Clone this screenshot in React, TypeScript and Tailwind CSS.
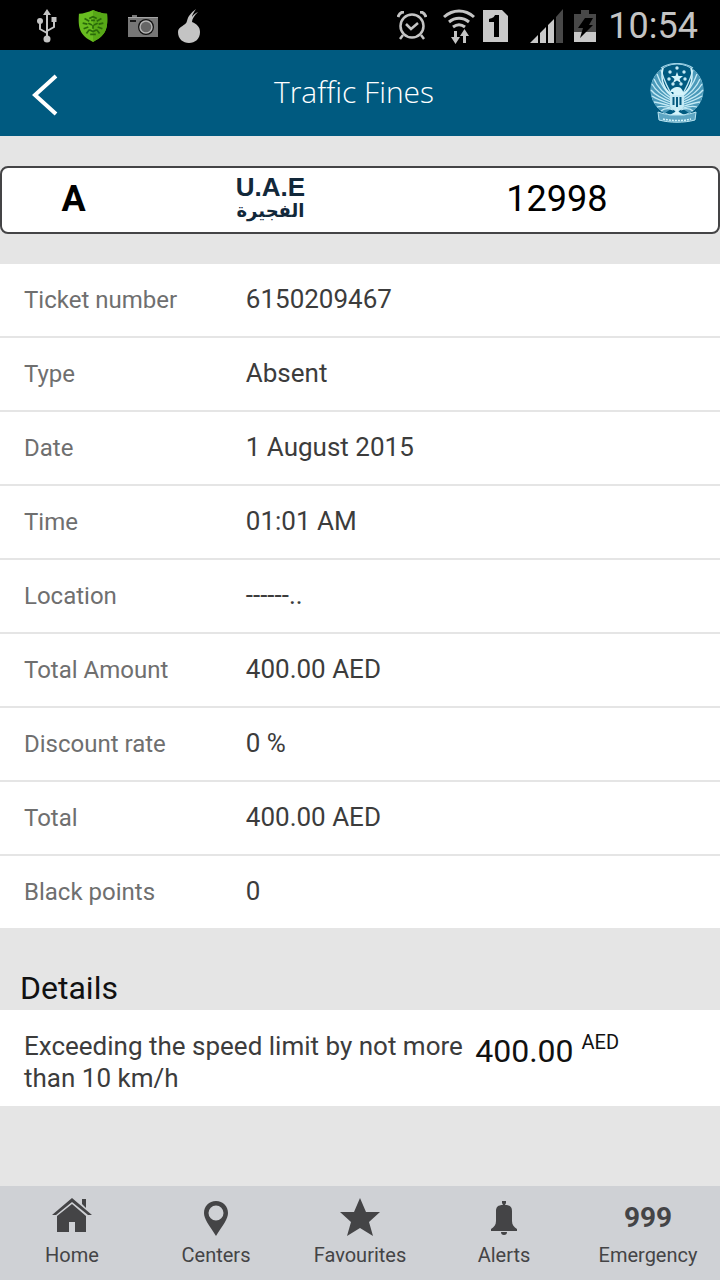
import type { ReactNode } from 'react'

const ticketRows = [
    { label: 'Ticket number', value: '6150209467' },
    { label: 'Type', value: 'Absent' },
    { label: 'Date', value: '1 August 2015' },
    { label: 'Time', value: '01:01 AM' },
    { label: 'Location', value: '------..' },
    { label: 'Total Amount', value: '400.00 AED' },
    { label: 'Discount rate', value: '0 %' },
    { label: 'Total', value: '400.00 AED' },
    { label: 'Black points', value: '0' },
]

const fines = [
    { text: 'Exceeding the speed limit by not more than 10 km/h', amount: '400.00', currency: 'AED' },
]

// Crest stars around the big one in the middle
const crestStars = [
    [20, 9], [34, 9], [19, 16], [35, 16], [23, 21], [31, 21], [27, 5],
]

// Tips of the left wing's feathers, from the top down; the right wing mirrors them
const feathers = [
    [11, 7], [7, 11], [4, 16], [2, 21], [1, 27], [2, 33], [4, 39], [7, 44], [11, 48],
]

function UsbIcon() {
    return (
        <svg width="22" height="36" viewBox="0 0 22 36" fill="none" stroke="#c4c4c4" strokeWidth="2">
            <path d="M11 5v24M11 25l-7-4v-8M11 23l7-4v-8" />
            <path d="M11 1l4 6H7zM15.500 9h5v5h-5z" fill="#c4c4c4" stroke="none" />
            <circle cx="4" cy="13" r="3" fill="#c4c4c4" stroke="none" />
            <circle cx="11" cy="31" r="3.500" fill="#c4c4c4" stroke="none" />
        </svg>
    )
}

function ShieldIcon() {
    return (
        <svg width="30" height="34" viewBox="0 0 32 34">
            <path d="M16 0C11 2 6 4 1 4c-1 14 0 23 15 30C31 27 32 18 31 4 26 4 21 2 16 0z" fill="#68bd20" />
            <path d="M16 0c5 2 10 4 15 4 1 14 0 23-15 30z" fill="#57a817" />
            <path
                d="M12 9l4-2 4 2M7 9l5 3M25 9l-5 3M5 14l5 1M27 14l-5 1M6 20l5-2M26 20l-5-2M9 25l3-4M23 25l-3-4M11 14l4 2M21 14l-4 2M16 16v4M12 21l4 2 4-2M13 26h6M14 11h4"
                stroke="#2a6a0a"
                strokeWidth="1.800"
                fill="none"
            />
        </svg>
    )
}

function CameraIcon() {
    return (
        <svg width="30" height="22" viewBox="0 0 30 22">
            <path d="M4 2V0h5v2h21v20H0V2z" fill="#777" />
            <path d="M0 2h30v1H0z" fill="#a5a5a5" />
            <path d="M2 5h6v2H2z" fill="#191919" />
            <circle cx="18" cy="12" r="8" fill="#111" />
            <circle cx="18" cy="12" r="6" fill="#666" stroke="#b5b5b5" strokeWidth="1.500" />
        </svg>
    )
}

function OnionIcon() {
    return (
        <svg width="22" height="34" viewBox="0 0 22 34">
            <path
                d="M9 12c1-5 4-8 9-12-2 3-4 6-4 8 2-3 4-4 6-5-4 4-6 7-6 10 5 2 8 5 8 10 0 7-5 11-11 11S0 30 0 23c0-6 8-6 9-11z"
                fill="#c4c4c4"
            />
        </svg>
    )
}

function AlarmIcon() {
    return (
        <svg width="30" height="30" viewBox="0 0 30 30" fill="none" stroke="#c4c4c4" strokeWidth="2.500">
            <circle cx="15" cy="15" r="11.500" />
            <path d="M9 13l5 5 7-6M6 24l-3 4M24 24l3 4" />
            <path d="M1 6c1-3 3-5 6-5M29 6c-1-3-3-5-6-5" strokeWidth="3" />
        </svg>
    )
}

function WifiIcon() {
    return (
        <svg width="32" height="35" viewBox="0 0 32 35" fill="none" stroke="#c4c4c4" strokeWidth="3">
            <path d="M1 8c9-8 21-8 30 0M6 13c6-5 14-5 20 0M10 18c4-3 8-3 12 0" />
            <path d="M12.500 22v7M21.500 26v8" />
            <path d="M8 28h9l-4.500 7zM17 27h9l-4.500-7z" fill="#c4c4c4" stroke="none" />
        </svg>
    )
}

function SimBadge() {
    return (
        <svg width="25" height="32" viewBox="0 0 25 32">
            <path d="M0 0h19l6 6v26H0z" fill="#c9c9c9" />
            <path d="M6 9c4-1 5-2 6-4h4v22h-5V12H6z" fill="#000" />
        </svg>
    )
}

function SignalIcon() {
    return (
        <svg width="34" height="34" viewBox="0 0 34 34">
            <path d="M0 34l8-8v8zM10 24l6-6v16h-6zM18 16l6-6v24h-6z" fill="#c9c9c9" />
            <path d="M26 8l7-8v34h-7z" fill="#484848" />
        </svg>
    )
}

function BatteryIcon() {
    return (
        <svg width="22" height="32" viewBox="0 0 22 32">
            <path d="M0 4h7V0h8v4h7v18H0z" fill="#484848" />
            <path d="M0 22h22v10H0z" fill="#c9c9c9" />
            <path d="M11 8h8l-4 7h4L6 28l3-10H4z" fill="#000" />
        </svg>
    )
}

function Wing() {
    return (
        <g>
            <path d="M13 5C4 12 0 20 1 29c1 10 6 17 14 21l9-6V33C14 28 10 17 13 5z" fill="#4b9aba" />
            {feathers.map(([x, y]) => (
                <path
                    key={`${x}-${y}`}
                    d={`M${x} ${y}Q${x + 5} ${y / 2 + 20} 23 ${y / 3 + 31}`}
                    stroke="#c4eaf5"
                    strokeWidth="1.300"
                />
            ))}
            <path d="M13 5c-3 12 1 23 11 28" stroke="#d4f4fb" strokeWidth="1.500" />
        </g>
    )
}

function Crest() {
    return (
        <svg width="54" height="60" viewBox="0 0 54 60" fill="none" role="img" aria-label="Police crest">
            <path d="M11 5c9-6 23-6 32 0" stroke="#9fd3e6" strokeWidth="1.200" />
            <circle cx="27" cy="27" r="26" stroke="#9fd3e6" strokeWidth="1" />
            <Wing />
            <g transform="matrix(-1 0 0 1 54 0)">
                <Wing />
            </g>
            {crestStars.map(([x, y]) => (
                <circle key={`${x}-${y}`} cx={x} cy={y} r="1.700" fill="#c4eaf5" />
            ))}
            <path d="M27 9l1.500 4H33l-3.500 3 1.500 4-4-2.500-4 2.500 1.500-4L21 13h4.500z" fill="#d4f4fb" />
            {/* eagle: head, breast shield, tail */}
            <path d="M20 29c1-3 4-5 8-5 3 0 5 3 6 8H22c2-1 2-2 1-3z" fill="#d4f4fb" />
            <path d="M20 32h14v9c0 4-3 6-7 8-4-2-7-4-7-8z" fill="#c4eaf5" />
            <path d="M23.500 34v8M27 34v10M30.500 34v8" stroke="#055a80" strokeWidth="2" />
            <path d="M27 45l2 4 7 4-7-1-2 3-2-3-7 1 7-4z" fill="#d4f4fb" />
            {/* scroll */}
            <path
                d="M8 49c5 2 9 2 12 3h14c3-1 7-1 12-3l-1 8c-11 3-25 3-36 0z"
                fill="#5ea6c3"
                stroke="#b9e4f1"
                strokeWidth="1"
            />
            <path d="M13 56c9 2 19 2 28 0" stroke="#d4f4fb" strokeWidth="1.500" strokeDasharray="2 1" />
        </svg>
    )
}

function HomeIcon() {
    return (
        <svg width="40" height="40" viewBox="0 0 40 40" fill="#444446">
            <path d="M30 1h4v9l-4-4z" />
            <path d="M0 17L20 0l20 17h-4L20 4 4 17z" />
            <path d="M20 6l14 12v16H23V24h-6v10H5V18z" />
        </svg>
    )
}

function PinIcon() {
    return (
        <svg width="26" height="36" viewBox="0 0 26 36" fill="#444446">
            <path
                fillRule="evenodd"
                d="M13 1c7 0 12 5 12 12 0 6-5 12-12 23C6 25 1 19 1 13 1 6 6 1 13 1zm0 4.500a7.500 7.500 0 100 15 7.500 7.500 0 000-15z"
            />
        </svg>
    )
}

function StarIcon() {
    return (
        <svg width="42" height="40" viewBox="0 0 42 40" fill="#444446">
            <path d="M21 0l6 14h14L30 24l4 14-13-8-13 8 4-14L1 14h14z" />
        </svg>
    )
}

function BellIcon() {
    return (
        <svg width="26" height="36" viewBox="0 0 26 36" fill="#444446">
            <path d="M11 1h4v2l-1 2c5 0 7 2 7 6v10c0 4 2 6 5 8v2H0v-2c3-2 5-4 5-8V11c0-4 2-6 7-6l-1-2zM10 32h6c0 2-1 3-3 3s-3-1-3-3z" />
        </svg>
    )
}

const navItems: { label: string; icon: ReactNode }[] = [
    { label: 'Home', icon: <HomeIcon /> },
    { label: 'Centers', icon: <PinIcon /> },
    { label: 'Favourites', icon: <StarIcon /> },
    { label: 'Alerts', icon: <BellIcon /> },
    { label: 'Emergency', icon: <span className="text-[28px] leading-8 font-bold">999</span> },
]

function StatusBar() {
    return (
        <div className="flex h-[50px] items-center justify-between bg-black pt-0.5 pr-[22px] pl-9">
            <div className="flex items-center gap-5">
                <UsbIcon />
                <ShieldIcon />
                <CameraIcon />
                <OnionIcon />
            </div>
            <div className="flex items-center">
                <div className="flex items-center gap-4">
                    <AlarmIcon />
                    <div className="flex items-center gap-2">
                        <WifiIcon />
                        <SimBadge />
                    </div>
                </div>
                <div className="ml-[22px] flex items-center gap-2.5">
                    <SignalIcon />
                    <BatteryIcon />
                    <span className="pl-0.5 text-4xl text-[#c4c4c4]">10:54</span>
                </div>
            </div>
        </div>
    )
}

function App() {
    return (
        <div className="flex min-h-screen flex-col bg-[#e5e5e5] font-['Roboto',sans-serif]">
            <StatusBar />

            {/* Title bar */}
            <header className="flex h-[86px] items-center justify-between bg-[#005a80] pr-4 pl-8 text-white">
                <button type="button" aria-label="Back" className="pt-1">
                    <svg width="26" height="42" viewBox="0 0 26 42" fill="none" stroke="currentColor" strokeWidth="4">
                        <path d="M24 2L3 21l21 19" />
                    </svg>
                </button>
                <h1 className="pb-1 font-['Open_Sans',sans-serif] text-[30px] font-light">Traffic Fines</h1>
                <Crest />
            </header>

            {/* Plate */}
            <section className="my-[30px] grid h-[68px] grid-cols-[20%_35%_45%] items-center rounded-lg border-2 border-[#444446] bg-white pb-0.5 text-center text-black">
                <span className="text-4xl font-bold">A</span>
                <span className="flex flex-col items-center text-[#12283a]">
                    <span className="font-['Liberation_Sans',sans-serif] text-[26px] leading-6 font-bold">U.A.E</span>
                    <span lang="ar" dir="rtl" className="font-['DejaVu_Sans',sans-serif] text-lg leading-6 font-bold">
                        الفجيرة
                    </span>
                </span>
                <span className="text-4xl">12998</span>
            </section>

            <table className="w-full table-fixed border-separate border-spacing-0 bg-white text-left">
                <tbody>
                    {ticketRows.map((row) => (
                        <tr key={row.label}>
                            <th
                                scope="row"
                                className="h-[74px] w-[34%] border-b-2 border-[#e5e5e5] pl-6 text-2xl font-normal text-[#6f6f6f]"
                            >
                                {row.label}
                            </th>
                            <td className="border-b-2 border-[#e5e5e5] pb-0.5 pl-px text-[26px] text-[#3c3c3c]">
                                {row.value}
                            </td>
                        </tr>
                    ))}
                </tbody>
            </table>

            {/* Details */}
            <h2 className="px-5 pt-9 text-[32px] leading-[44px] text-[#111]">Details</h2>
            {fines.map((fine) => (
                <div key={fine.text} className="flex min-h-24 items-start bg-white pt-5 pb-3">
                    <p className="w-[66%] pl-6 text-[26px] leading-8 text-[#3c3c3c]">{fine.text}</p>
                    <div className="flex items-start gap-2 text-[#111]">
                        <span className="text-[32px] leading-[42px]">{fine.amount}</span>
                        <span className="text-xl leading-6">{fine.currency}</span>
                    </div>
                </div>
            ))}

            <nav className="mt-auto grid h-[94px] grid-cols-5 bg-[#cfd1d5] text-[#444446]">
                {navItems.map((item) => (
                    <a key={item.label} href="#" className="flex flex-col items-center pt-3">
                        <span className="flex h-10 items-center">{item.icon}</span>
                        <span className="text-xl leading-[34px]">{item.label}</span>
                    </a>
                ))}
            </nav>
        </div>
    )
}

export default App
